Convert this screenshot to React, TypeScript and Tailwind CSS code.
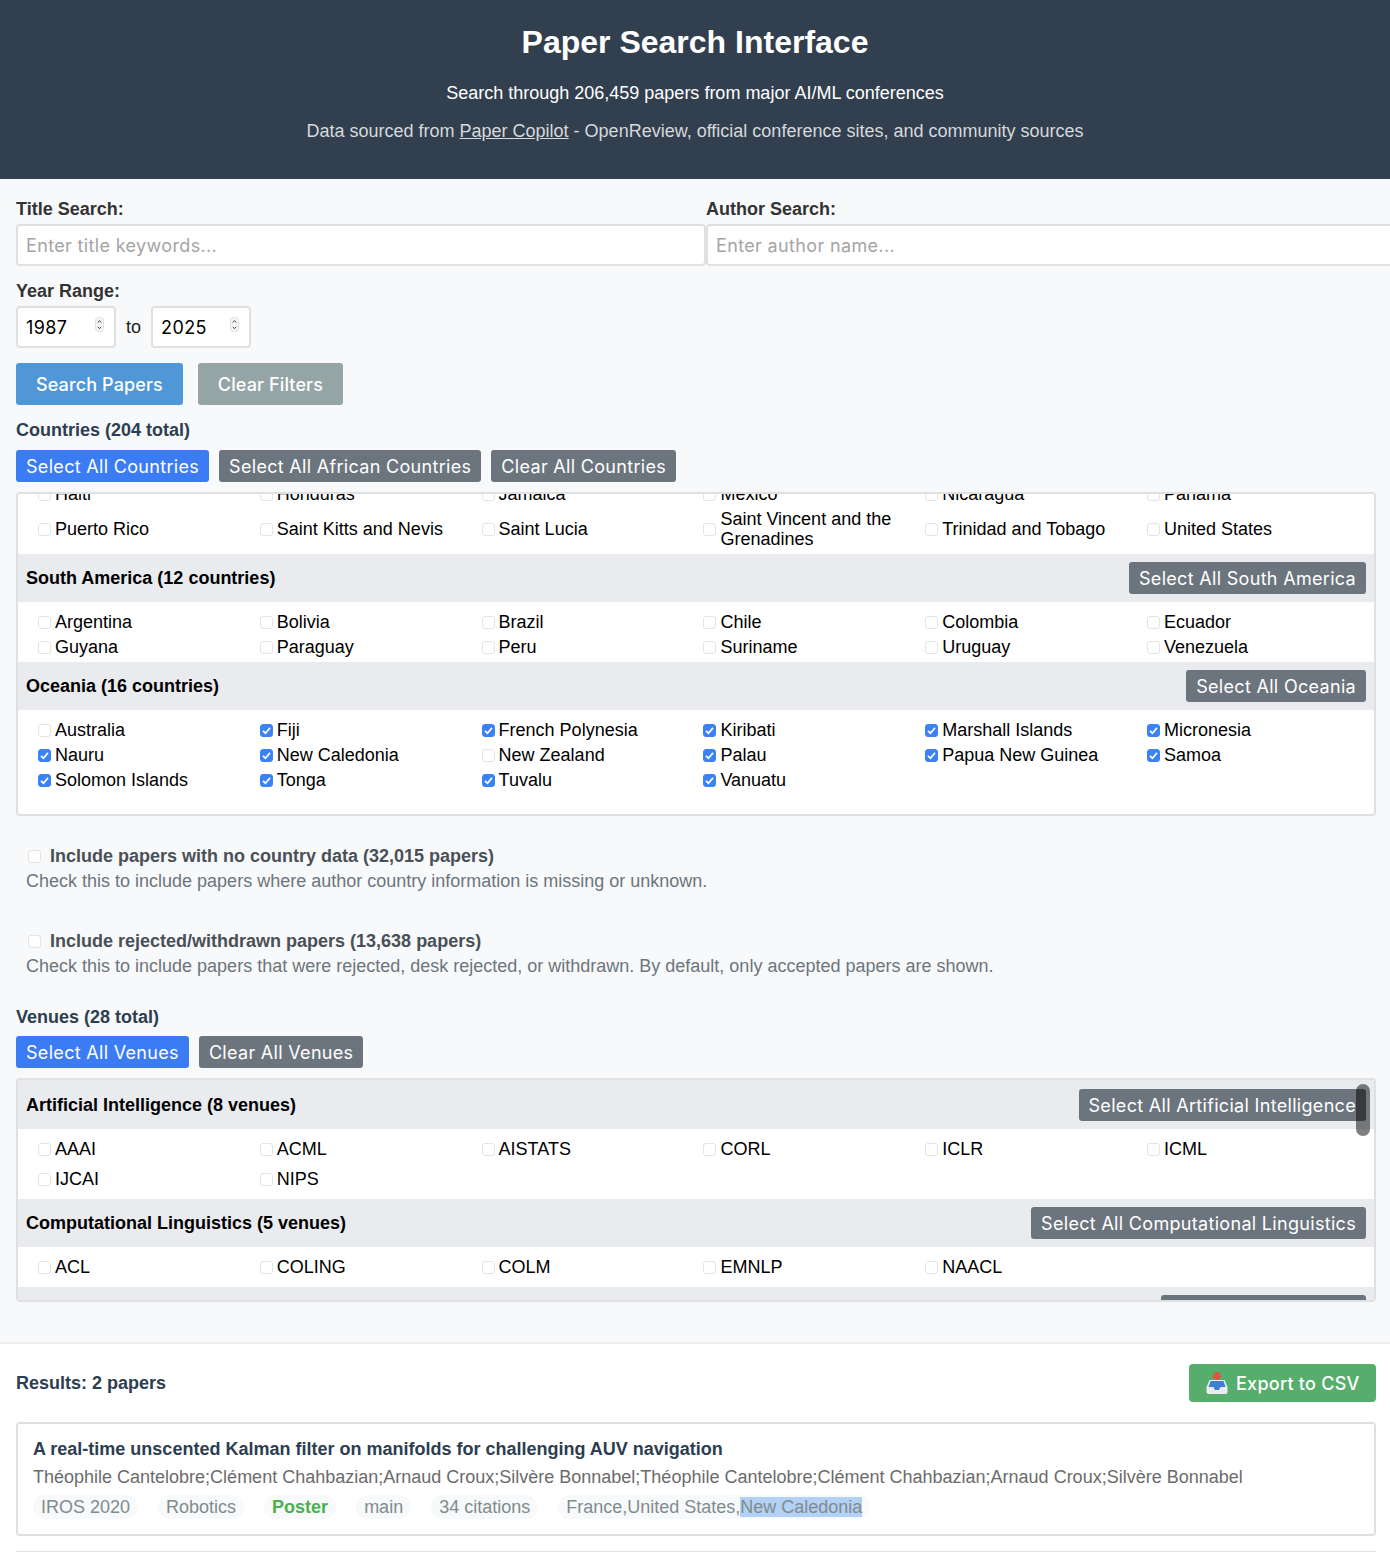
import React from "react";

const sans = "font-['Liberation_Sans',Arial,sans-serif]";
const ui = "font-['Inter',sans-serif]";

function Check({ on, className = "" }: { on?: boolean; className?: string }) {
  return (
    <span className={`relative inline-flex w-[13px] h-[13px] shrink-0 ${className}`}>
      <input
        type="checkbox"
        defaultChecked={on}
        className="appearance-none w-[13px] h-[13px] m-0 rounded-[3px] border border-[#e4e4e4] bg-white checked:bg-[#3b82f6] checked:border-[#3b82f6]"
      />
      {on && (
        <svg viewBox="0 0 13 13" className="absolute inset-0 w-[13px] h-[13px] pointer-events-none">
          <path d="M3 6.800 L5.400 9.200 L10 3.900" fill="none" stroke="#fff" strokeWidth="1.7" />
        </svg>
      )}
    </span>
  );
}

function Item({ label, on }: { label: string; on?: boolean }) {
  return (
    <label className="flex items-center text-[18px] leading-[20px] text-black min-w-0">
      <Check on={on} className="ml-[3px] mr-[4px]" />
      <span>{label}</span>
    </label>
  );
}

function Btn({ children, blue }: { children: React.ReactNode; blue?: boolean }) {
  return (
    <button
      className={`${ui} h-[32px] pt-[1px] px-[10px] rounded-[3px] text-[18px] leading-[31px] text-white whitespace-nowrap tracking-[0.31px] ${
        blue ? "bg-[#3b7cf4]" : "bg-[#6c757d]"
      }`}
    >
      {children}
    </button>
  );
}

function GroupHead({ title, btn, tall }: { title: string; btn: string; tall?: boolean }) {
  return (
    <div className={`flex items-center justify-between bg-[#e9ebef] pl-[8px] pr-[8px] ${tall ? "h-[49px] pt-[1px]" : "h-[48px]"}`}>
      <span className="font-bold text-[18px] text-black">{title}</span>
      <Btn>{btn}</Btn>
    </div>
  );
}

const grid = "grid grid-cols-[repeat(6,221.8px)] pl-[17px] bg-white";

function CountryRows({ rows }: { rows: [string, boolean?][] }) {
  return (
    <div className={`${grid} auto-rows-[25px] items-center pt-[7.5px] pb-[2.5px]`}>
      {rows.map(([n, on]) => (
        <Item key={n} label={n} on={on} />
      ))}
    </div>
  );
}

function VenueRows({ names }: { names: string[] }) {
  return (
    <div className={`${grid} auto-rows-[30px] items-center py-[5px]`}>
      {names.map((n) => (
        <Item key={n} label={n} />
      ))}
    </div>
  );
}

function Pill({ children, className = "" }: { children: React.ReactNode; className?: string }) {
  return (
    <span className={`inline-flex items-center h-[24px] px-[8px] rounded-full bg-[#f8f9fa] text-[18px] text-[#7f8c8d] whitespace-nowrap ${className}`}>
      {children}
    </span>
  );
}

function NumBox({ value }: { value: string }) {
  return (
    <div className={`${ui} relative flex items-center w-[100px] h-[42px] bg-white border-2 border-[#e0e0e0] rounded-[4px] pl-[8px] text-[18px] tracking-[0.4px] text-black`}>
      {value}
      <svg viewBox="0 0 9 16" className="absolute right-[10px] top-[9px] w-[9px] h-[16px]">
        <rect x="0.5" y="0.5" width="8" height="14" rx="3" fill="#f4f4f4" stroke="#e2e2e2" />
        <path d="M2.800 5.500 L4.500 3.600 L6.200 5.500 M2.800 9.800 L4.500 11.700 L6.200 9.800" fill="none" stroke="#444" strokeWidth="1" />
      </svg>
    </div>
  );
}

function Field({ label, ph }: { label: string; ph: string }) {
  return (
    <div>
      <div className="h-[22px] leading-[22px] font-bold text-[18px] text-[#333] mb-[4px]">{label}</div>
      <input
        placeholder={ph}
        className={`${ui} block w-full h-[42px] bg-white border-2 border-[#e0e0e0] rounded-[4px] px-[8px] text-[18px] tracking-[0.35px] placeholder:text-[#a4a4a4] outline-none`}
      />
    </div>
  );
}

function Option({ title, desc, top }: { title: string; desc: string; top: string }) {
  return (
    <div className={`pl-[10px] ${top}`}>
      <label className="flex items-center h-[25px]">
        <Check className="ml-[2px] mr-[9px]" />
        <span className="font-bold text-[18px] text-[#495057]">{title}</span>
      </label>
      <div className="h-[25px] leading-[25px] text-[18px] text-[#6c757d]">{desc}</div>
    </div>
  );
}

export default function App() {
  return (
    <div className={`${sans} w-[1390px] h-[1552px] overflow-hidden bg-[#f8f9fa] text-[18px]`}>
      <header className="h-[179px] bg-[#323f4f] text-center pt-[20px]">
        <h1 className="text-[32px] leading-[44px] font-bold text-white">Paper Search Interface</h1>
        <p className="mt-[17px] h-[24px] leading-[24px] text-[18px] text-white">Search through 206,459 papers from major AI/ML conferences</p>
        <p className="mt-[14px] h-[24px] leading-[24px] text-[18px] text-[#d6d9dc]">
          Data sourced from <a className="underline">Paper Copilot</a> - OpenReview, official conference sites, and community sources
        </p>
      </header>

      <section className="pl-[16px] pr-[14px] pt-[19px] h-[1165px] border-b-2 border-[#eeeeee]">
        <div className="grid grid-cols-[690px_690px]">
          <Field label="Title Search:" ph="Enter title keywords..." />
          <Field label="Author Search:" ph="Enter author name..." />
        </div>

        <div className="mt-[14px] h-[22px] leading-[22px] font-bold text-[18px] text-[#333]">Year Range:</div>
        <div className="mt-[4px] flex items-center gap-[10px]">
          <NumBox value="1987" />
          <span className="text-[18px] text-[#222]">to</span>
          <NumBox value="2025" />
        </div>

        <div className="mt-[15px] flex gap-[15px]">
          <button className={`${ui} h-[42px] px-[20px] rounded-[3px] bg-[#5097d8] text-white text-[18px] font-medium tracking-[0.12px]`}>Search Papers</button>
          <button className={`${ui} h-[42px] px-[20px] rounded-[3px] bg-[#95a5a6] text-white text-[18px] font-medium tracking-[0.12px]`}>Clear Filters</button>
        </div>

        <div className="mt-[14px] h-[22px] leading-[22px] font-bold text-[18px] text-[#2c3e50]">Countries (204 total)</div>
        <div className="mt-[9px] flex gap-[10px]">
          <Btn blue>Select All Countries</Btn>
          <Btn>Select All African Countries</Btn>
          <Btn>Clear All Countries</Btn>
        </div>

        <div className="mt-[10px] h-[324px] overflow-hidden border-2 border-[#e0e0e0] rounded-[4px] bg-white">
          <div className="-mt-[10px]">
            <div className={`${grid} items-center h-[20px]`}>
              {["Haiti", "Honduras", "Jamaica", "Mexico", "Nicaragua", "Panama"].map((n) => (
                <Item key={n} label={n} />
              ))}
            </div>
            <div className={`${grid} items-center h-[50px]`}>
              {["Puerto Rico", "Saint Kitts and Nevis", "Saint Lucia", "Saint Vincent and the Grenadines", "Trinidad and Tobago", "United States"].map((n) => (
                <label key={n} className="flex items-center text-[18px] leading-[20px] text-black pr-[20px]">
                  <Check className="ml-[3px] mr-[4px]" />
                  <span>{n}</span>
                </label>
              ))}
            </div>
            <GroupHead title="South America (12 countries)" btn="Select All South America" />
            <CountryRows
              rows={[["Argentina"], ["Bolivia"], ["Brazil"], ["Chile"], ["Colombia"], ["Ecuador"], ["Guyana"], ["Paraguay"], ["Peru"], ["Suriname"], ["Uruguay"], ["Venezuela"]]}
            />
            <GroupHead title="Oceania (16 countries)" btn="Select All Oceania" />
            <CountryRows
              rows={[
                ["Australia"],
                ["Fiji", true],
                ["French Polynesia", true],
                ["Kiribati", true],
                ["Marshall Islands", true],
                ["Micronesia", true],
                ["Nauru", true],
                ["New Caledonia", true],
                ["New Zealand"],
                ["Palau", true],
                ["Papua New Guinea", true],
                ["Samoa", true],
                ["Solomon Islands", true],
                ["Tonga", true],
                ["Tuvalu", true],
                ["Vanuatu", true],
              ]}
            />
          </div>
        </div>

        <Option
          top="mt-[28px]"
          title="Include papers with no country data (32,015 papers)"
          desc="Check this to include papers where author country information is missing or unknown."
        />
        <Option
          top="mt-[35px]"
          title="Include rejected/withdrawn papers (13,638 papers)"
          desc="Check this to include papers that were rejected, desk rejected, or withdrawn. By default, only accepted papers are shown."
        />

        <div className="mt-[27px] h-[22px] leading-[22px] font-bold text-[18px] text-[#2c3e50]">Venues (28 total)</div>
        <div className="mt-[8px] flex gap-[10px]">
          <Btn blue>Select All Venues</Btn>
          <Btn>Clear All Venues</Btn>
        </div>

        <div className="relative mt-[10px] h-[224px] overflow-hidden border-2 border-[#e0e0e0] rounded-[4px] bg-white">
          <GroupHead tall title="Artificial Intelligence (8 venues)" btn="Select All Artificial Intelligence" />
          <VenueRows names={["AAAI", "ACML", "AISTATS", "CORL", "ICLR", "ICML", "IJCAI", "NIPS"]} />
          <GroupHead title="Computational Linguistics (5 venues)" btn="Select All Computational Linguistics" />
          <VenueRows names={["ACL", "COLING", "COLM", "EMNLP", "NAACL"]} />
          <div className="h-[40px] bg-[#e9ebef] flex justify-end pr-[8px] pt-[8px]">
            <div className="w-[205px] h-[32px] rounded-[3px] bg-[#6c757d]" />
          </div>
          <div className="absolute right-[4px] top-[4px] w-[14px] h-[52px] rounded-full bg-black/50" />
        </div>
      </section>

      <section className="bg-white h-[208px] pl-[16px] pr-[14px]">
        <div className="flex items-center justify-between pt-[20px] h-[58px]">
          <span className="font-bold text-[18px] text-[#2c3e50]">Results: 2 papers</span>
          <button className={`${ui} flex items-center h-[38px] w-[187px] pl-[16px] pt-[1px] rounded-[4px] bg-[#55ae6c] text-white text-[18px] font-medium tracking-[0.25px]`}>
            <svg viewBox="0 0 24 24" className="w-[24px] h-[24px] mr-[7px] -mt-[1px]">
              <path d="M9.500 1h5v3.500h3L12 10 6.500 4.500h3z" fill="#e4523f" />
              <path d="M4.500 9h15l3 7v5a2 2 0 0 1-2 2h-17a2 2 0 0 1-2-2v-5z" fill="#e9edf1" />
              <path d="M5.500 10h13l2 6h-5l-1.500 3h-4l-1.500-3h-5z" fill="#3f7fd1" />
            </svg>
            Export to CSV
          </button>
        </div>

        <div className="mt-[20px] h-[114px] border-2 border-[#e0e0e0] rounded-[4px] px-[15px] pt-[13px]">
          <div className="h-[24px] leading-[24px] font-bold text-[18px] text-[#2c3e50]">A real-time unscented Kalman filter on manifolds for challenging AUV navigation</div>
          <div className="mt-[4px] h-[24px] leading-[24px] text-[18px] text-[#6b6b6b]">
            Théophile Cantelobre;Clément Chahbazian;Arnaud Croux;Silvère Bonnabel;Théophile Cantelobre;Clément Chahbazian;Arnaud Croux;Silvère Bonnabel
          </div>
          <div className="mt-[6px] flex gap-[20px]">
            <Pill>IROS 2020</Pill>
            <Pill>Robotics</Pill>
            <Pill className="font-bold !text-[#4caf50]">Poster</Pill>
            <Pill>main</Pill>
            <Pill>34 citations</Pill>
            <Pill>
              France,United States,<span className="bg-[#b3d0f5] leading-[20px]">New Caledonia</span>
            </Pill>
          </div>
        </div>
        <div className="mt-[15px] h-[30px] border-t-2 border-[#e0e0e0]" />
      </section>
    </div>
  );
}
